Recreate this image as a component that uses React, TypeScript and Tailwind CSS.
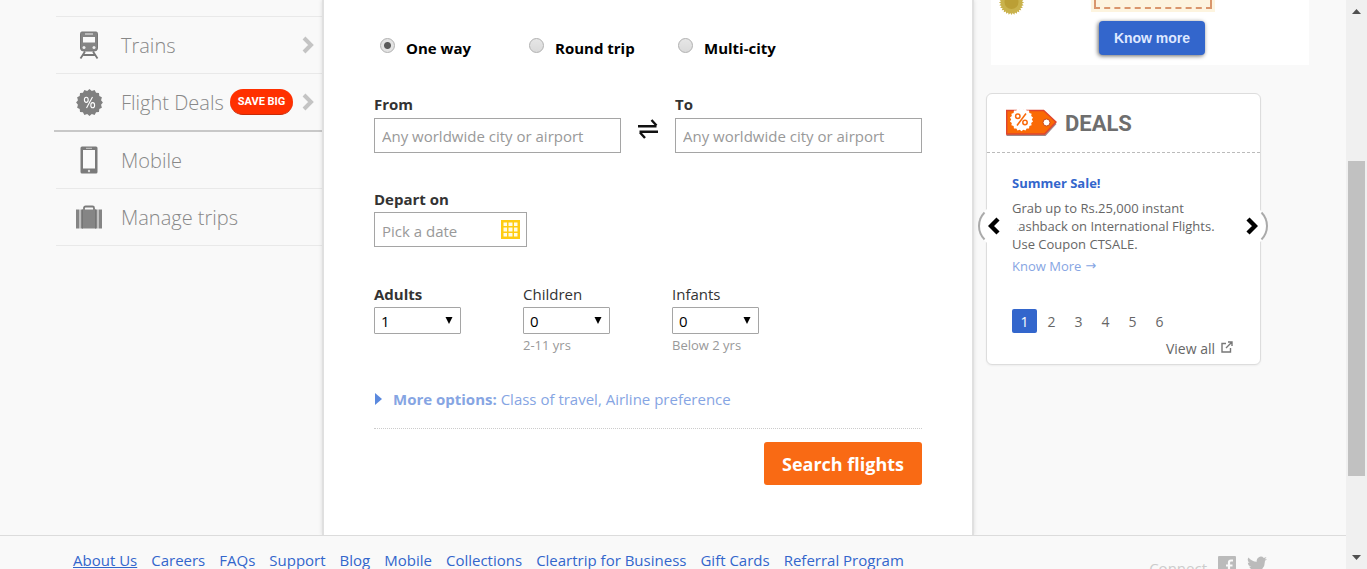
import { useState, type ReactNode } from "react";

const TrainIcon = () => (
  <svg width="22" height="28" viewBox="0 0 22 28" fill="none">
    <path d="M4 1h14a1.500 1.500 0 0 1 1.500 1.500V17a3 3 0 0 1-3 3H5.500a3 3 0 0 1-3-3V2.500A1.500 1.500 0 0 1 4 1Z" fill="#858585" stroke="#777" />
    <path d="M7 3h8" stroke="#ddd" strokeWidth="1.200" />
    <path d="M5 6h12v5.500H5z" fill="#fafafa" />
    <circle cx="6" cy="16.500" r="1.500" fill="#eee" />
    <circle cx="16" cy="16.500" r="1.500" fill="#eee" />
    <path d="m7 20.500-4.500 7M15 20.500l4.500 7M5.500 24h11" stroke="#777" strokeWidth="1.800" />
  </svg>
);

const sealPoints = (cx: number, cy: number, outer: number, inner: number, teeth: number) =>
  Array.from({ length: teeth * 2 }, (_, i) => {
    const r = i % 2 ? inner : outer;
    const a = (Math.PI * i) / teeth;
    return `${(cx + r * Math.sin(a)).toFixed(2)},${(cy - r * Math.cos(a)).toFixed(2)}`;
  }).join(" ");

const SealIcon = () => (
  <svg width="27" height="27" viewBox="0 0 27 27">
    <polygon points={sealPoints(13.5, 13.5, 13.4, 11.8, 16)} fill="#808080" />
    <g fill="none" stroke="#fff" strokeWidth="1.100">
      <ellipse cx="10.300" cy="10.800" rx="1.900" ry="2.600" />
      <ellipse cx="16.700" cy="16.200" rx="1.900" ry="2.600" />
      <path d="M16.500 8 10.500 19" />
    </g>
  </svg>
);

const PhoneIcon = () => (
  <svg width="18" height="28" viewBox="0 0 18 28">
    <rect x="0.500" y="0.500" width="17" height="27" rx="1.500" fill="#7b7b7b" />
    <rect x="3" y="4" width="12" height="18.500" fill="#fafafa" />
    <path d="M6 2.300h6" stroke="#ccc" />
    <circle cx="9" cy="25" r="1.200" fill="#ddd" />
  </svg>
);

const SuitcaseIcon = () => (
  <svg width="26" height="24" viewBox="0 0 26 24">
    <path d="M8 5V3a1.500 1.500 0 0 1 1.500-1.500h7A1.500 1.500 0 0 1 18 3v2" fill="none" stroke="#7b7b7b" strokeWidth="1.800" />
    <path d="M0 4.500h3.500v19H0zM4.500 4.500h17v19h-17zM22.500 4.500H26v19h-3.500z" fill="#858585" />
    <path d="M6.500 4.500v19M19.500 4.500v19" stroke="#747474" />
  </svg>
);

const Chevron = ({ className, width = 3.6 }: { className?: string; width?: number }) => (
  <svg className={className} width="12" height="18" viewBox="0 0 12 18" fill="none">
    <path d="m2 2 7 7-7 7" stroke="currentColor" strokeWidth={width} />
  </svg>
);

function NavItem({ icon, label, badge, arrow, strong }: { icon: ReactNode; label: string; badge?: string; arrow?: boolean; strong?: boolean }) {
  return (
    <li className={strong ? "border-b-2 border-[#c8c8c8]" : "ml-0.5 border-b border-[#e9e9e9]"}>
      <a
        href="#"
        className={`flex h-14 items-center pr-2 text-xl font-light text-[#888] ${strong ? "pl-[19px]" : "pl-[17px]"}`}
      >
        <span className="flex w-9 justify-center pr-1">{icon}</span>
        <span className="ml-3 pt-0.5 whitespace-nowrap">{label}</span>
        {badge && (
          <span className="mr-1 ml-1.5 rounded-full border-b border-[#c62a08] bg-[#ff3000] px-2 py-1 font-['Roboto','Liberation_Sans',sans-serif] text-[11px] leading-[17px] font-bold whitespace-nowrap text-white">
            {badge}
          </span>
        )}
        {arrow && <Chevron className="ml-auto shrink-0 text-[#c4c4c4]" width={4} />}
      </a>
    </li>
  );
}

function TripType({ label, checked, onChange }: { label: string; checked: boolean; onChange: () => void }) {
  return (
    <label className="flex w-[149px] items-start pl-1.5 text-[15px] leading-5 font-bold text-black">
      <input
        type="radio"
        name="trip"
        checked={checked}
        onChange={onChange}
        className="mr-[11px] size-[15px] appearance-none rounded-full border border-[#b0b0b0] bg-linear-to-b from-[#e6e6e6] to-[#dadada] checked:bg-[radial-gradient(circle,#5a5a5a_0_3px,#e3e3e3_4px)]"
      />
      {label}
    </label>
  );
}

function Place({ id, label }: { id: string; label: string }) {
  return (
    <div className="min-w-0 flex-1">
      <label htmlFor={id} className="block text-[15px] leading-7 font-bold text-[#333]">{label}</label>
      <input
        id={id}
        type="text"
        placeholder="Any worldwide city or airport"
        className="block h-[35px] w-full border border-[#a5a5a5] bg-white px-[7px] text-[15px] placeholder:text-[#999]"
      />
    </div>
  );
}

function Count({ id, label, hint, initial, bold }: { id: string; label: string; hint?: string; initial: number; bold?: boolean }) {
  return (
    <div className="w-[149px]">
      <label htmlFor={id} className={`block text-[15px] leading-[26px] text-[#333] ${bold ? "font-bold" : ""}`}>{label}</label>
      <div className="relative w-[87px]">
        <select
          id={id}
          defaultValue={initial}
          className="block h-[27px] w-full appearance-none rounded-[1px] border border-[#a5a5a5] bg-white px-1.5 pt-0.5 text-[15px] text-black"
        >
          {[0, 1, 2, 3, 4, 5, 6, 7, 8, 9].map((n) => (
            <option key={n}>{n}</option>
          ))}
        </select>
        <svg className="pointer-events-none absolute top-2.5 right-2" width="8" height="7" viewBox="0 0 8 7">
          <path d="M0.500 0h7L4 7z" fill="#000" />
        </svg>
      </div>
      {hint && <p className="text-[13px] leading-[22px] text-[#999]">{hint}</p>}
    </div>
  );
}

const SwapIcon = () => (
  <svg width="20" height="20" viewBox="0 0 20 20" fill="none" stroke="#111" strokeWidth="2.400">
    <path d="M0 7.300h18.500M13.500 1l5 5.500M20 12.700H1.500M7 19l-5-5.500" />
  </svg>
);

const CalendarIcon = () => (
  <svg width="19" height="19" viewBox="0 0 19 19">
    <path d="M0 0h19v19H0z" fill="#fc1" />
    <path d="M2.500 2.500h3.500v3.500H2.500zM7.500 2.500h4v3.500h-4zM13 2.500h3.500v3.500H13zM2.500 7.500h3.500v4H2.500zM7.500 7.500h4v4h-4zM13 7.500h3.500v4H13zM2.500 13h3.500v3.500H2.500zM7.500 13h4v3.500h-4zM13 13h3.500v3.500H13z" fill="#fffbe8" />
  </svg>
);

const TagIcon = () => (
  <svg width="51" height="28" viewBox="0 0 51 28">
    <path d="M.5 3.500h38l12 11.500-11 12H.5z" fill="#8b6a68" opacity=".8" />
    <path d="M.7 1.500h37L50 13 38.500 25H.7z" fill="#fa6a05" stroke="#e0452d" strokeWidth="1.400" />
    <polygon points={sealPoints(15.5, 10.5, 11.7, 10.3, 18)} fill="#fff" />
    <g fill="none" stroke="#f96a0b" strokeWidth="1.500">
      <circle cx="11.800" cy="7.300" r="2.200" />
      <circle cx="19" cy="13.500" r="2.200" />
      <path d="m20 4.500-9 12" />
    </g>
    <circle cx="40.500" cy="13.500" r="3.500" fill="#fff" stroke="#c7471d" />
  </svg>
);

function SlideButton({ side }: { side: "left" | "right" }) {
  return (
    <button
      type="button"
      aria-label={side === "left" ? "Previous deal" : "Next deal"}
      className={`absolute top-[112px] flex size-10 items-center rounded-full border-2 border-transparent bg-white text-black ${
        side === "left" ? "-left-[9px] border-l-[#aaa] pl-2" : "-right-[8px] justify-end border-r-[#aaa] pr-2"
      }`}
    >
      <Chevron className={side === "left" ? "rotate-180" : ""} width={4.4} />
    </button>
  );
}

const footerLinks = ["About Us", "Careers", "FAQs", "Support", "Blog", "Mobile", "Collections", "Cleartrip for Business", "Gift Cards", "Referral Program"];

export default function App() {
  const [trip, setTrip] = useState("One way");
  const [page, setPage] = useState(1);
  return (
    <div className="flex h-screen overflow-hidden bg-[#f9f9f9] font-['Open_Sans','Noto_Sans',sans-serif]">
      <div className="flex min-w-0 flex-1 flex-col">
        <div className="flex flex-1 pl-[54px]">
          <nav className="w-[268px] shrink-0 pt-[15px]">
            <ul>
              <li className="ml-0.5 border-b border-[#e9e9e9] pb-px" />
              <NavItem icon={<TrainIcon />} label="Trains" arrow />
              <NavItem icon={<SealIcon />} label="Flight Deals" badge="SAVE BIG" arrow strong />
              <NavItem icon={<PhoneIcon />} label="Mobile" />
              <NavItem icon={<SuitcaseIcon />} label="Manage trips" />
            </ul>
          </nav>

          <main className="w-[652px] shrink-0 border-x-2 border-[#e0e0e0] bg-white px-[50px] pt-[38px] pb-[50px] shadow-[0_0_4px_rgba(0,0,0,0.12)]">
            <form onSubmit={(e) => e.preventDefault()}>
              <div className="flex">
                {["One way", "Round trip", "Multi-city"].map((t) => (
                  <TripType key={t} label={t} checked={trip === t} onChange={() => setTrip(t)} />
                ))}
              </div>

              <div className="mt-8 flex items-end">
                <Place id="from" label="From" />
                <button type="button" aria-label="Swap cities" className="flex w-[54px] justify-center pb-3.5">
                  <SwapIcon />
                </button>
                <Place id="to" label="To" />
              </div>

              <div className="mt-8">
                <label htmlFor="depart" className="block pt-px text-[15px] leading-[26px] font-bold text-[#333]">Depart on</label>
                <div className="flex h-[35px] w-[153px] items-center border border-[#a5a5a5] pr-1.5 pl-[7px]">
                  <input id="depart" type="text" placeholder="Pick a date" className="min-w-0 flex-1 pt-1 text-[15px] placeholder:text-[#999]" />
                  <CalendarIcon />
                </div>
              </div>

              <div className="mt-[34px] flex">
                <Count id="adults" label="Adults" initial={1} bold />
                <Count id="children" label="Children" hint="2-11 yrs" initial={0} />
                <Count id="infants" label="Infants" hint="Below 2 yrs" initial={0} />
              </div>

              <a href="#" className="mt-8 flex items-center border-b border-dotted border-[#ccc] pb-[18px] text-[15px] leading-[22px] text-[#86a5e3]">
                <svg className="mr-[11px] ml-px" width="7" height="12" viewBox="0 0 7 12">
                  <path d="M0 0v12l7-6z" fill="#5b89de" />
                </svg>
                <span>
                  <b className="font-bold">More options:</b> Class of travel, Airline preference
                </span>
              </a>

              <div className="mt-[13px] flex justify-end">
                <button type="submit" className="h-[43px] w-[158px] rounded-[3px] bg-[#f96a14] text-lg font-bold text-white">
                  Search flights
                </button>
              </div>
            </form>
          </main>

          <aside className="min-w-0 flex-1 pl-3">
            <div className="ml-[5px] flex h-[65px] w-[318px] max-w-full items-start bg-white pl-2">
              <svg width="25" height="16" viewBox="0 0 25 16">
                <polygon points={sealPoints(12.5, 2.5, 12.5, 10.5, 28)} fill="#c9b24c" />
                <circle cx="12.500" cy="2" r="7" fill="#bb9f35" />
              </svg>
              <div className="ml-[75px] flex flex-col">
                <div className="mx-[-8px] h-3 w-[124px] bg-[#fdf4df] px-[3px]">
                  <div className="h-[9px] border-x-2 border-b-2 border-dashed border-[#d9966c]" />
                </div>
                <button
                  type="button"
                  className="mt-[9px] h-[34px] w-[106px] rounded-sm bg-[#3366cc] font-['Liberation_Sans',sans-serif] text-sm font-bold text-[#dfe8ff] shadow-[-1px_1px_4px_rgba(0,0,0,0.6)]"
                >
                  Know more
                </button>
              </div>
            </div>

            <section className="relative mt-7 w-[275px] rounded-md border border-[#ddd] bg-white pb-[5px] shadow-xs">
              <h2 className="flex h-[59px] items-center gap-2 border-b border-dashed border-[#bbb] pl-[19px] font-['Roboto','Liberation_Sans',sans-serif] text-[22px] font-bold text-[#6e6e6e]">
                <TagIcon />
                DEALS
              </h2>
              <div className="px-[25px] pt-5">
                <h3 className="text-[13px] leading-5 font-bold text-[#3366cc]">Summer Sale!</h3>
                <p className="mt-1.5 text-[13px] leading-[18px] text-[#666]">
                  Grab up to Rs.25,000 instant
                  <br />
                  cashback on International Flights.
                  <br />
                  Use Coupon CTSALE.
                </p>
                <a href="#" className="mt-[3px] flex items-center gap-1 text-[13px] leading-5 text-[#86a5e3]">
                  Know More <span className="font-['DejaVu_Sans',sans-serif]">→</span>
                </a>
                <div className="mt-[33px] flex gap-0.5">
                  {[1, 2, 3, 4, 5, 6].map((n) => (
                    <button
                      key={n}
                      type="button"
                      onClick={() => setPage(n)}
                      className={`h-6 w-[25px] rounded-xs pt-0.5 text-sm ${page === n ? "bg-[#3366cc] text-white" : "text-[#666]"}`}
                    >
                      {n}
                    </button>
                  ))}
                </div>
                <a href="#" className="mt-1.5 flex items-start justify-end gap-1.5 pr-0.5 text-sm leading-5 text-[#666]">
                  View all
                  <svg className="mt-0.5" width="12" height="12" viewBox="0 0 12 12" fill="none" stroke="#777" strokeWidth="1.400">
                    <path d="M5 2.500H1v8.500h8.500V7M7 1h4v4M11 1 5 7" />
                  </svg>
                </a>
              </div>
              <SlideButton side="left" />
              <SlideButton side="right" />
            </section>
          </aside>
        </div>

        <footer className="flex h-[34px] shrink-0 items-start justify-between border-t border-[#dcdcdc] bg-[#f9f9f9] pr-[79px] pl-[73px]">
          <div className="flex gap-3.5 pt-[15px] text-[15px] leading-[18px] whitespace-nowrap text-[#3366cc]">
            {footerLinks.map((l, i) => (
              <a key={l} href="#" className={i === 0 ? "underline" : ""}>{l}</a>
            ))}
          </div>
          <div className="flex items-start gap-[11px] pt-5 text-[#bbb]">
            <span className="text-[15px] leading-6 text-[#ccc]">Connect</span>
            <svg width="18" height="18" viewBox="0 0 18 18">
              <path d="M1 0h16a1 1 0 0 1 1 1v16a1 1 0 0 1-1 1H1a1 1 0 0 1-1-1V1a1 1 0 0 1 1-1Z" fill="currentColor" />
              <path d="M15 4.500h-2q-2 0-2 2V18M8 9.500h6.500" fill="none" stroke="#fafafa" strokeWidth="2.200" />
            </svg>
            <svg width="20" height="18" viewBox="0 0 24 20" fill="currentColor">
              <path d="M24 2.400a10 10 0 0 1-2.800.8A5 5 0 0 0 23.300.5a10 10 0 0 1-3.100 1.200 4.900 4.900 0 0 0-8.400 4.500A14 14 0 0 1 1.700 1a5 5 0 0 0 1.500 6.600A5 5 0 0 1 1 7a5 5 0 0 0 3.900 4.900 5 5 0 0 1-2.200 0 5 5 0 0 0 4.600 3.500A10 10 0 0 1 0 17.400 14 14 0 0 0 21.500 5a10 10 0 0 0 2.500-2.600Z" />
            </svg>
          </div>
        </footer>
      </div>

      <div className="flex w-[21px] shrink-0 flex-col items-center bg-[#f0f0f0] pt-[9px] pb-[9px]">
        <svg width="9" height="5" viewBox="0 0 9 5"><path d="M0 5h9L4.500 0z" fill="#505050" /></svg>
        <div className="mt-[147px] h-[315px] w-[17px] bg-[#c1c1c1]" />
        <svg className="mt-auto" width="9" height="5" viewBox="0 0 9 5"><path d="M0 0h9L4.500 5z" fill="#505050" /></svg>
      </div>
    </div>
  );
}
